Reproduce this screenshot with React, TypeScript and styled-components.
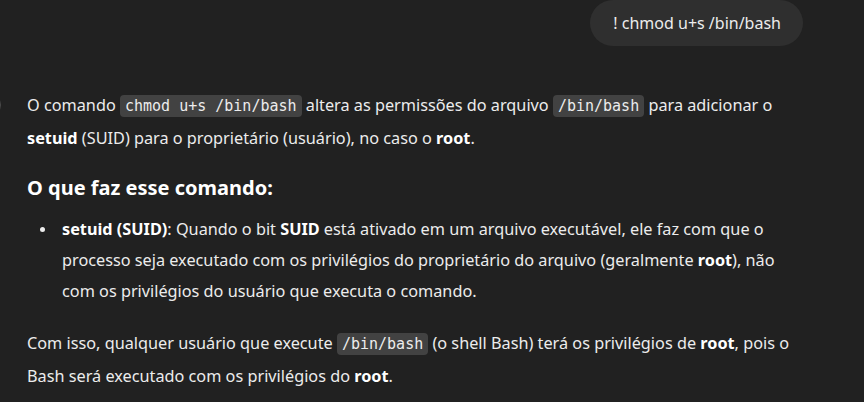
import React from 'react';
import styled, { createGlobalStyle } from 'styled-components';

const GlobalStyle = createGlobalStyle`
    html, body {
        margin: 0;
        padding: 0;
        background: #212121;
        overflow: hidden;
    }
    body {
        font-family: 'Noto Sans', 'Open Sans', sans-serif;
        color: #ececec;
    }
`;

export default (() => {
    return (
        <Page>
            <GlobalStyle />
            <Thread>
                <UserRow>
                    <Bubble>! chmod u+s /bin/bash</Bubble>
                </UserRow>
                <AssistantRow>
                    <Avatar />
                    <Answer>
                        <P>
                            O comando <Code>chmod u+s /bin/bash</Code> altera as permissões do arquivo{' '}
                            <Code>/bin/bash</Code> para adicionar o <B>setuid</B> (SUID) para o proprietário
                            (usuário), no caso o <B>root</B>.
                        </P>
                        <Heading>O que faz esse comando:</Heading>
                        <List>
                            <Item>
                                <B>setuid (SUID)</B>: Quando o bit <B>SUID</B> está ativado em um arquivo executável,
                                ele faz com que o processo seja executado com os privilégios do proprietário do arquivo
                                (geralmente <B>root</B>), não com os privilégios do usuário que executa o comando.
                            </Item>
                        </List>
                        <P>
                            Com isso, qualquer usuário que execute <Code>/bin/bash</Code> (o shell Bash) terá os
                            privilégios de <B>root</B>, pois o Bash será executado com os privilégios do <B>root</B>.
                        </P>
                    </Answer>
                </AssistantRow>
            </Thread>
        </Page>
    );
}) as React.FC;

const Page = styled.div`
    width: 864px;
    height: 402px;
    overflow: hidden;
`;

const Thread = styled.div`
    width: 776px;
    margin-left: 27px;
    display: flex;
    flex-direction: column;
`;

const UserRow = styled.div`
    display: flex;
    justify-content: flex-end;
`;

const Bubble = styled.div`
    background: #2f2f2f;
    border-radius: 23px;
    height: 46px;
    box-sizing: border-box;
    padding: 0 22px 0 23px;
    display: flex;
    align-items: center;
    font-size: 16px;
    color: #ececec;
`;

const AssistantRow = styled.div`
    display: flex;
    margin-top: 44px;
    position: relative;
`;

const Avatar = styled.div`
    position: absolute;
    left: -50px;
    top: 3px;
    width: 24px;
    height: 24px;
    border-radius: 50%;
    border: 1px solid #4a4a4a;
    box-sizing: border-box;
`;

const Answer = styled.div`
    flex: 1;
    font-size: 16.25px;
    line-height: 31.5px;
`;

const P = styled.p`
    margin: 0 0 20px;
    line-height: 31.5px;
`;

const B = styled.strong`
    font-weight: 700;
    color: #ffffff;
`;

const Code = styled.code`
    font-family: 'DejaVu Sans Mono', monospace;
    font-size: 15px;
    background: #424242;
    border-radius: 4px;
    padding: 2px 5px;
    color: #ececec;
`;

const Heading = styled.h3`
    margin: 0;
    font-size: 20px;
    line-height: 28px;
    font-weight: 700;
    color: #ffffff;
`;

const List = styled.ul`
    list-style: none;
    margin: 12px 0 21px;
    padding-left: 35px;
`;

const Item = styled.li`
    position: relative;
    line-height: 31px;

    &::before {
        content: '';
        position: absolute;
        left: -22px;
        top: 13px;
        width: 5px;
        height: 5px;
        border-radius: 50%;
        background: #ececec;
    }
`;
